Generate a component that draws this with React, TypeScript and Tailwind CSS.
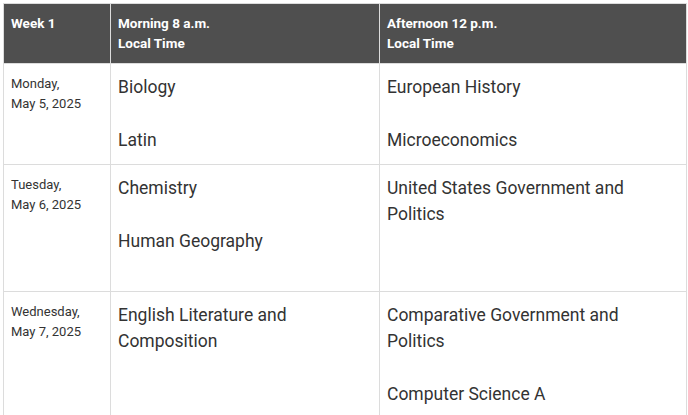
import React from 'react';

type Row = {
  day: string;
  date: string;
  morning: string[];
  afternoon: string[];
};

// empty strings are blank lines between exams
const rows: Row[] = [
  { day: 'Monday,', date: 'May 5, 2025', morning: ['Biology', '', 'Latin'], afternoon: ['European History', '', 'Microeconomics'] },
  { day: 'Tuesday,', date: 'May 6, 2025', morning: ['Chemistry', '', 'Human Geography', ''], afternoon: ['United States Government and Politics'] },
  { day: 'Wednesday,', date: 'May 7, 2025', morning: ['English Literature and Composition'], afternoon: ['Comparative Government and Politics', '', 'Computer Science A'] },
];

function Lines({ items }: { items: string[] }) {
  return (
    <>
      {items.map((line, i) => (
        <div key={i} className="min-h-[26.5px]">
          {line}
        </div>
      ))}
    </>
  );
}

export default function App() {
  return (
    <div className="bg-white w-[688px] h-[415px] overflow-hidden pt-[3px] pl-[3px]" style={{ fontFamily: 'Roboto, "Liberation Sans", sans-serif' }}>
      <table className="table-fixed border-collapse w-[683px]">
        <colgroup>
          <col className="w-[107px]" />
          <col className="w-[269px]" />
          <col className="w-[307px]" />
        </colgroup>
        <thead>
          <tr className="bg-[#4f4f4f] text-white text-[13.5px] font-bold leading-[20px] text-left align-top">
            <th className="px-[7px] pt-[9px] pb-[10px] border border-[#dcdcdc]">Week 1</th>
            <th className="px-[7px] pt-[9px] pb-[10px] border border-[#dcdcdc]">
              Morning 8 a.m.
              <br />
              Local Time
            </th>
            <th className="px-[7px] pt-[9px] pb-[10px] border border-[#dcdcdc]">
              Afternoon 12 p.m.
              <br />
              Local Time
            </th>
          </tr>
        </thead>
        <tbody>
          {rows.map((r) => (
            <tr key={r.date} className="align-top text-[#333333]">
              <td className="px-[7px] py-[10px] border border-[#dcdcdc] text-[13px] leading-[20px]">
                {r.day}
                <br />
                {r.date}
              </td>
              <td className="pl-[7px] pr-[12px] py-[10px] border border-[#dcdcdc] text-[17.5px] leading-[26.5px]">
                <Lines items={r.morning} />
              </td>
              <td className="pl-[7px] pr-[12px] py-[10px] border border-[#dcdcdc] text-[17.5px] leading-[26.5px]">
                <Lines items={r.afternoon} />
              </td>
            </tr>
          ))}
        </tbody>
      </table>
    </div>
  );
}
